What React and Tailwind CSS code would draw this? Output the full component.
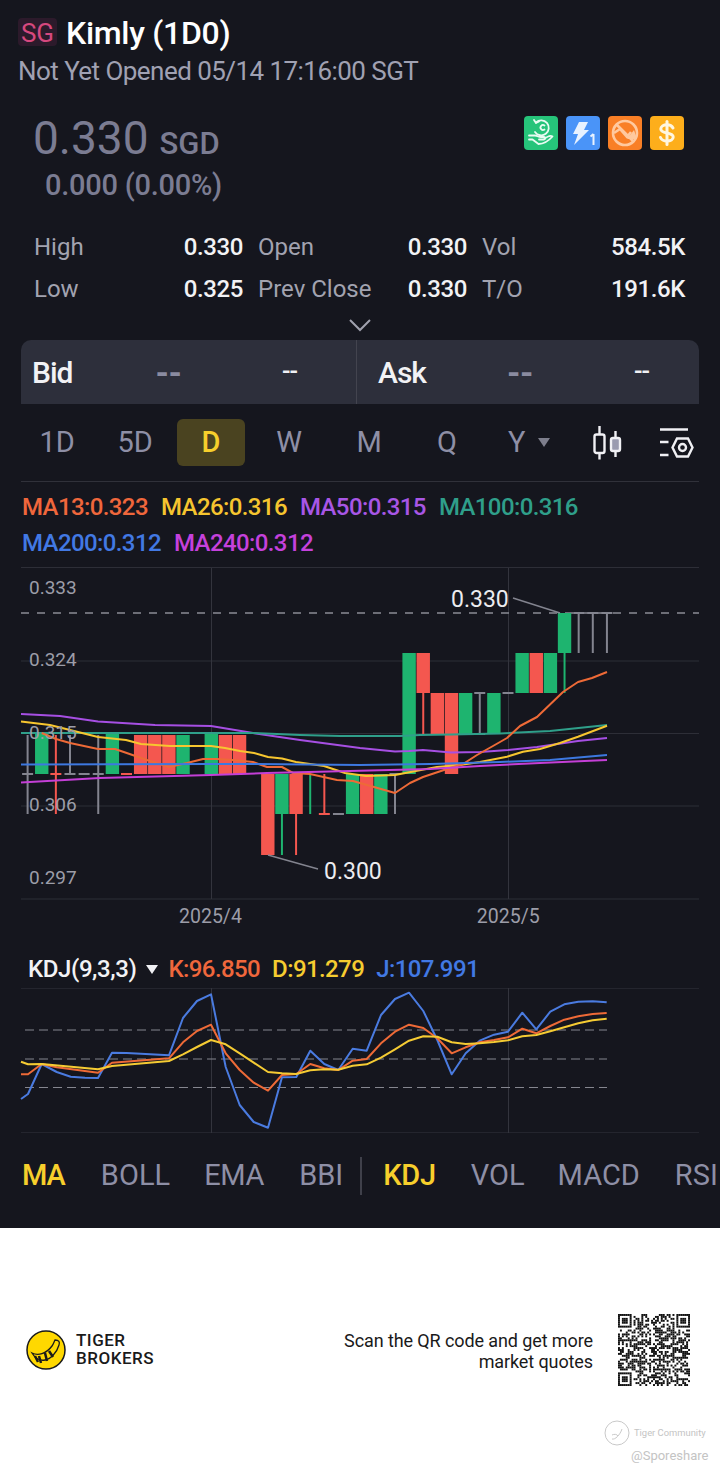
import React from 'react';

const X = (i) => 27.6 + i * 14.13;
const GREEN = '#1eb46f';
const RED = '#f4574f';
const GREY = '#83848f';

// [index, top, bottom, color]
const bodies = [
  [1, 733, 774, GREEN], [6, 733, 774, GREEN], [8, 735, 774, RED], [9, 735, 774, RED], [10, 735, 774, RED],
  [11, 735, 774, GREEN], [13, 733, 774, GREEN], [14, 735, 774, RED], [15, 735, 774, RED],
  [17, 774, 855, RED], [18, 774, 814, GREEN], [19, 774, 814, RED], [23, 774, 814, GREEN], [24, 774, 814, RED],
  [25, 774, 814, GREEN], [27, 653, 774, GREEN], [28, 653, 693, RED], [29, 693, 734, RED], [30, 693, 774, RED],
  [31, 693, 734, GREEN], [33, 693, 734, GREEN], [35, 653, 693, GREEN], [36, 653, 693, RED], [37, 653, 693, GREEN],
  [38, 613, 653, GREEN],
];
const wicks = [
  [0, 735, 814, GREY], [2, 735, 814, RED], [3, 735, 774, GREY], [5, 735, 814, GREY], [18, 814, 855, GREEN],
  [19, 814, 855, RED], [20, 774, 814, GREEN], [21, 774, 814, RED], [26, 774, 814, GREY], [28, 693, 734, RED],
  [32, 693, 734, GREY], [38, 653, 693, GREEN], [39, 613, 653, GREY], [40, 613, 653, GREY], [41, 613, 653, GREY],
];
const caps = [
  [0, 774, GREY], [2, 774, RED], [3, 774, GREY], [4, 774, GREY], [5, 774, GREY], [7, 774, RED], [21, 814, RED],
  [22, 814, GREY], [26, 774, GREY], [32, 693, GREY], [32, 734, GREY], [34, 693, GREY], [39, 613, GREY], [40, 613, GREY], [41, 613, GREY],
];

const maLines = [
  ['#a64fe3', '21,714 60,716 98,721.5 155,725 211,726 253,733 300,740 360,748 395,751.5 409,751 423,750 451,752.5 480,752 508,750 537,747 578,741 607,738'],
  ['#2f9f8a', '21,733 100,733 211,733 253,733 300,735 340,736 400,736 420,735 451,734.5 500,733.5 550,731 607,725'],
  ['#f7c62f', '21,721.5 50,725 98,737 126,740 141,744 170,746 211,746 225,748 240,751 254,753 268,757 282,758.5 296,762 324,766 345,773 366,776 395,775 417,770.7 437,767 460,765 480,762 507,756.7 523,751.7 540,749 560,743 578,736.7 607,725.7'],
  ['#ee6a37', '41.7,733 56,739 70,743 98,749 115,749 126.7,753 147,760 169,767 187,763 203,759 217,759 233,760 253,762 267,767 282,767 293,773 310,774 337,780 353,781 360,783 395,793 410,783 423,777 435,773 450,768 463,764 477,755 493,746 507,738 520,726 537,717 563,692 578,682 592,678 607,672'],
  ['#3d78e0', '21,764.5 211,764 250,764 360,765 430,764 500,762 550,760 607,755'],
  ['#c43fd6', '21,782.5 100,778 211,775 267,773 360,770.7 430,769 480,766 540,763 607,760'],
];

const kdjLines = [
  ['#4a7be0', '21,1099 28,1094 41.7,1064 56.7,1072 70.7,1076.7 85,1077.7 98,1078 112,1052.7 126.7,1053 169,1055.3 183,1018 197,1001 211,994.3 225.7,1067 239.7,1105 253.7,1122 268,1127.7 282,1077.3 296.3,1077 310.3,1050.7 324.3,1064 338.3,1070 352.7,1048.7 366.7,1050.7 381,1015 395,999 409,992.7 423.3,1011 437.3,1040 451.7,1074.3 465.7,1053.3 479.7,1040.7 494,1034.7 508,1031.7 522.3,1012.7 536.3,1029.3 550.3,1011.7 564.3,1004.3 578.3,1001.7 592.7,1001.3 606.7,1002.3'],
  ['#ee6a37', '21,1074.3 28,1074.3 41.7,1064 56.7,1067.3 98,1072.7 112,1062.7 169,1058.3 183,1042.3 197,1031 211,1024.7 225.7,1053.3 239.7,1070 253.7,1082.7 268,1090.7 282,1075 296.3,1074 310.3,1064 324.3,1068.3 338.3,1070 352.7,1060.7 366.7,1059 381,1043.3 395,1031.7 409,1024.7 423.3,1028 437.3,1038.3 451.7,1053.3 465.7,1047.3 479.7,1042.3 494,1040 508,1037.3 522.3,1028.7 536.3,1033.3 550.3,1026 564.3,1019.7 578.3,1016.3 592.7,1014 606.7,1013'],
  ['#f5cb33', '21,1061.7 28,1064.3 41.7,1064 98,1069.3 112,1066 169,1061 183,1054.3 197,1047 211,1040 225.7,1044.3 239.7,1053.3 253.7,1062.7 268,1072 282,1073.3 296.3,1074 310.3,1070.3 324.3,1069.3 338.3,1069.7 352.7,1065.7 366.7,1064.3 381,1057.7 395,1049.3 409,1040.7 423.3,1036.3 437.3,1036.7 451.7,1042.3 465.7,1044 479.7,1043.3 494,1042 508,1040.3 522.3,1036.3 536.3,1035 550.3,1031.3 564.3,1027.3 578.3,1023.3 592.7,1020.3 606.7,1018.7'],
];

const priceLabels = [
  ['0.333', 'top-[9px]'],
  ['0.324', 'top-[81px]'],
  ['0.315', 'top-[154px]'],
  ['0.306', 'top-[226px]'],
  ['0.297', 'top-[299px]'],
];

const PriceChart = () => (
  <div className="relative h-[333px] shrink-0">
    <svg className="block w-[720px] h-[333px]" viewBox="0 567 720 333">
      {[567.5, 661, 733.5, 806, 899].map((y) => (
        <line key={y} x1="21" x2="699" y1={y} y2={y} stroke="#2d2e37" strokeWidth="1" />
      ))}
      <line x1="211.5" x2="211.5" y1="568" y2="899" stroke="#33343d" />
      <line x1="508.5" x2="508.5" y1="568" y2="899" stroke="#33343d" />
      <line x1="21" x2="699" y1="613" y2="613" stroke="#8b8c95" strokeWidth="1.5" strokeDasharray="8 8" />
      {bodies.map(([i, t, b, c]) => (
        <rect key={i} x={X(i) - 6.7} y={t} width="13.4" height={b - t} fill={c} />
      ))}
      {wicks.map(([i, t, b, c]) => (
        <line key={`w${i}`} x1={X(i)} x2={X(i)} y1={t} y2={b} stroke={c} strokeWidth="2" />
      ))}
      {caps.map(([i, y, c]) => (
        <line key={`c${i}${y}`} x1={X(i) - 5.5} x2={X(i) + 5.5} y1={y} y2={y} stroke={c} strokeWidth="2" />
      ))}
      {maLines.map(([c, pts]) => (
        <polyline key={c} points={pts} fill="none" stroke={c} strokeWidth="2" strokeLinejoin="round" />
      ))}
      <line x1="513" y1="598" x2="560" y2="613" stroke={GREY} strokeWidth="1.5" />
      <line x1="268" y1="855" x2="318" y2="869" stroke={GREY} strokeWidth="1.5" />
    </svg>
    {priceLabels.map(([t, top]) => (
      <span key={t} className={`absolute left-[29px] ${top} text-[19px] leading-[24px] text-[#9c9da8]`}>{t}</span>
    ))}
    <span className="absolute left-[451px] top-[19px] text-[23px] leading-[28px] text-[#ececf0]">0.330</span>
    <span className="absolute left-[324px] top-[291px] text-[23px] leading-[28px] text-[#ececf0]">0.300</span>
  </div>
);

const KdjChart = () => (
  <svg className="block w-[720px] h-[146px] shrink-0" viewBox="0 988 720 146">
    <line x1="21" x2="699" y1="988.5" y2="988.5" stroke="#24252e" />
    <line x1="21" x2="699" y1="1132.5" y2="1132.5" stroke="#24252e" />
    <line x1="211.5" x2="211.5" y1="988" y2="1133" stroke="#33343d" />
    <line x1="508.5" x2="508.5" y1="988" y2="1133" stroke="#33343d" />
    {[1030, 1059, 1087.5].map((y) => (
      <line key={y} x1="25" x2="607" y1={y} y2={y} stroke="#85868f" strokeWidth="1" strokeDasharray="9 5" />
    ))}
    {kdjLines.map(([c, pts]) => (
      <polyline key={c} points={pts} fill="none" stroke={c} strokeWidth="2" strokeLinejoin="round" />
    ))}
  </svg>
);

const Badges = () => (
  <div className="flex gap-2">
    <svg className="rounded" width="34" height="34" viewBox="0 0 34 34" fill="none" stroke="#e9fbf2" strokeWidth="1.8" strokeLinecap="round" strokeLinejoin="round">
      <rect width="34" height="34" fill="#26c47a" stroke="none" />
      <path d="M12 6.500A7.500 7.500 0 1 1 11 16" />
      <path d="M10 4l2 3 3-1.500" />
      <path d="M20.500 9.500a2.500 2.500 0 1 0 0 4" />
      <path d="M5 19.500h6c2.500 0 3 1.500 6 1.500h3c1.500 0 1.500 2.500 0 2.500h-5" />
      <path d="M5 23.500l3.500 0 6 4.500c4 0 10-3 14-7.500-2-1.500-4-.5-8 2" />
    </svg>
    <svg className="rounded" width="34" height="34" viewBox="0 0 34 34">
      <rect width="34" height="34" fill="#4a94f8" />
      <path d="M13 6h9l-4 8h5L8 29l4-11H7z" fill="#e8f2ff" />
      <path d="M27.500 18v11M24.500 20.500l3-2.500" stroke="#e8f2ff" strokeWidth="2" fill="none" />
    </svg>
    <svg className="rounded" width="34" height="34" viewBox="0 0 34 34" fill="none" stroke="#ffc99f" strokeWidth="2.600" strokeLinejoin="round">
      <rect width="34" height="34" fill="#f97f26" stroke="none" />
      <circle cx="17" cy="17" r="12" />
      <path d="M8 8l18 18" />
      <path d="M6 17l6-4 7 8 4-5" />
      <path d="M19 23l7-9 3 9z" fill="#ffc99f" stroke="none" />
    </svg>
    <svg className="rounded" width="34" height="34" viewBox="0 0 34 34" fill="none" stroke="#fff6df" strokeWidth="3" strokeLinecap="round">
      <rect width="34" height="34" fill="#fdae1b" stroke="none" />
      <path d="M23 12c-1-2-3.200-3.200-6-3.200-3.500 0-6.200 1.700-6.200 4.200 0 5.500 12.400 2.500 12.400 8 0 2.500-2.700 4-6.200 4-3 0-5.500-1.200-6.500-3.500" />
      <path d="M17 5.500v23" />
    </svg>
  </div>
);

const StatCol = ({ w, rows }) => (
  <div className={`${w} flex flex-col`}>
    {rows.map(([k, v]) => (
      <div key={k} className="h-[42px] flex items-center justify-between">
        <span className="text-[#a2a3b0]">{k}</span>
        <span className="text-[#f2f2f5] font-medium tracking-[-0.4px]">{v}</span>
      </div>
    ))}
  </div>
);

const TabItem = ({ w, children }) => (
  <div className={`${w} h-[47px] flex items-center justify-center text-[29px] tracking-[-0.2px] text-[#8e8fa6]`}>{children}</div>
);

// module pattern for the qr square
const qrCells = () => {
  const n = 37;
  const cells = [];
  let s = 20250514;
  const finder = (r, c) => {
    const a = r < 8 ? 0 : n - 7;
    const b = c < 8 ? 0 : n - 7;
    const dr = r - a;
    const dc = c - b;
    if (dr < 0 || dr > 6 || dc < 0 || dc > 6) return false;
    return dr === 0 || dr === 6 || dc === 0 || dc === 6 || (dr > 1 && dr < 5 && dc > 1 && dc < 5);
  };
  for (let r = 0; r < n; r++) {
    for (let c = 0; c < n; c++) {
      s = (s * 1664525 + 1013904223) % 4294967296;
      const corner = (r < 8 && c < 8) || (r < 8 && c >= n - 8) || (r >= n - 8 && c < 8);
      const f = corner ? finder(r, c) : s / 4294967296 > 0.5;
      if (f) cells.push([r, c]);
    }
  }
  return cells;
};

const Qr = () => (
  <svg className="block w-[72px] h-[72px]" viewBox="0 0 37 37">
    {qrCells().map(([r, c]) => (
      <rect key={`${r}-${c}`} x={c} y={r} width="1" height="1" fill="#111" />
    ))}
  </svg>
);

export default function App() {
  return (
    <div className="w-[720px] h-[1472px] overflow-hidden bg-white font-['Roboto',sans-serif]">
      <div className="h-[1228px] bg-[#15161e] flex flex-col">
        {/* title */}
        <div className="h-[38px] mt-[14px] pl-[18px] flex items-center">
          <span className="w-[39px] h-[28px] -mt-[3px] bg-[#2c1a2b] text-[#d6487e] text-[26px] leading-[30px] text-center rounded-sm">SG</span>
          <span className="ml-[9px] text-[32px] tracking-[-0.3px] font-medium text-white whitespace-nowrap">Kimly (1D0)</span>
        </div>
        <div className="h-[36px] mt-[1px] pl-[18px] flex items-center text-[26px] tracking-[-0.55px] text-[#a0a1b2] whitespace-nowrap">
          Not Yet Opened 05/14 17:16:00 SGT
        </div>

        {/* price */}
        <div className="h-[120px] mt-[17px] pl-[33px] pr-[36px] flex justify-between items-start">
          <div className="flex flex-col text-[#7b7c92]">
            <div className="h-[64px] flex items-baseline gap-[11px] pt-[2px]">
              <span className="text-[46px] leading-[60px]">0.330</span>
              <span className="text-[31px] font-medium">SGD</span>
            </div>
            <div className="ml-[12px] -mt-[5px] text-[29px] tracking-[-0.25px] leading-[40px] font-medium">0.000 (0.00%)</div>
          </div>
          <div className="mt-[10px]"><Badges /></div>
        </div>

        {/* stats */}
        <div className="pl-[34px] pr-[35px] flex text-[24px] gap-[15px]">
          <StatCol w="w-[209px]" rows={[['High', '0.330'], ['Low', '0.325']]} />
          <StatCol w="w-[209px]" rows={[['Open', '0.330'], ['Prev Close', '0.330']]} />
          <StatCol w="w-[203px]" rows={[['Vol', '584.5K'], ['T/O', '191.6K']]} />
        </div>
        <div className="h-[30px] flex items-center justify-center">
          <svg width="24" height="14" viewBox="0 0 24 14" fill="none" stroke="#a0a1ae" strokeWidth="2"><path d="M2 2l10 10 10-10" /></svg>
        </div>

        {/* bid ask */}
        <div className="mx-[21px] h-[64px] flex rounded-t-[10px] bg-[#2d2f3b] shrink-0 text-[30px]">
          <div className="w-[336px] pl-[11px] pr-[59px] flex items-center border-r border-[#43444f]">
            <span className="font-medium tracking-[-1px] text-[#f2f2f5]">Bid</span>
            <span className="ml-[83px] text-[34px] tracking-[-0.5px] text-[#8a8ba0] font-bold">--</span>
            <span className="ml-auto text-[25px] tracking-[-1px] text-[#f0f0f4] font-medium">--</span>
          </div>
          <div className="flex-1 pl-[21px] pr-[50px] flex items-center">
            <span className="font-medium tracking-[-1px] text-[#f2f2f5]">Ask</span>
            <span className="ml-[81px] text-[34px] tracking-[-0.5px] text-[#8a8ba0] font-bold">--</span>
            <span className="ml-auto text-[25px] tracking-[-1px] text-[#f0f0f4] font-medium">--</span>
          </div>
        </div>

        {/* period tabs */}
        <div className="h-[78px] mx-[21px] flex items-center border-b border-[#30313a] shrink-0">
          <TabItem w="w-[72px]">1D</TabItem>
          <TabItem w="w-[84px]">5D</TabItem>
          <div className="w-[68px] h-[47px] rounded-md bg-[#4a4320] flex items-center justify-center text-[29px] font-medium text-[#f7cf2c]">D</div>
          <TabItem w="w-[88px]">W</TabItem>
          <TabItem w="w-[72px]">M</TabItem>
          <TabItem w="w-[84px]">Q</TabItem>
          <div className="w-[104px] h-[47px] flex items-center text-[29px] text-[#8e8fa6] pl-[19px]">
            <span>Y</span>
            <svg className="ml-[13px]" width="12" height="9" viewBox="0 0 12 9"><path d="M0 0h12L6 9z" fill="#7d7e8c" /></svg>
          </div>
          <svg width="30" height="34" viewBox="0 0 30 34" fill="none" stroke="#f0f0f4" strokeWidth="2.4">
            <rect x="1.500" y="8.500" width="10" height="18.500" rx="2" />
            <path d="M6.500 0v8.500M6.500 27v6.500" />
            <rect x="18" y="12" width="9" height="13" rx="2" fill="#9a9bb0" />
            <path d="M22.500 5v7M22.500 25v6" />
          </svg>
          <svg className="ml-[37px]" width="34" height="30" viewBox="0 0 34 30" fill="none" stroke="#f0f0f4" strokeWidth="2.400">
            <path d="M0 1.500h28M0 14h8.500M0 27h8.500" />
            <path d="M17 10.500h11l4.500 9-4.500 9H17l-4.500-9z" />
            <circle cx="22.500" cy="19.500" r="3.500" />
          </svg>
        </div>

        {/* MA legend */}
        <div className="pl-[22px] pt-[7px] h-[85px] text-[24px] leading-[36px] tracking-[-0.6px] font-medium shrink-0 whitespace-nowrap">
          <div className="flex gap-[13px]">
            <span className="text-[#f0673c]">MA13:0.323</span>
            <span className="text-[#f6c52f]">MA26:0.316</span>
            <span className="text-[#a856e6]">MA50:0.315</span>
            <span className="text-[#2f9f8a]">MA100:0.316</span>
          </div>
          <div className="flex gap-[13px]">
            <span className="text-[#4279e4]">MA200:0.312</span>
            <span className="text-[#c541dc]">MA240:0.312</span>
          </div>
        </div>

        <PriceChart />

        <div className="h-[36px] pb-[2px] pl-[179px] shrink-0 flex items-center text-[19.500px] text-[#9c9da8] whitespace-nowrap">
          <span>2025/4</span>
          <span className="ml-[235px]">2025/5</span>
        </div>

        {/* KDJ legend */}
        <div className="h-[52px] shrink-0 pl-[28px] pt-[14px] flex items-center text-[24px] font-medium whitespace-nowrap">
          <span className="text-[#f2f2f5] tracking-[-0.4px]">KDJ(9,3,3)</span>
          <svg className="ml-[9px]" width="12" height="9" viewBox="0 0 12 9"><path d="M0 0h12L6 9z" fill="#f0f0f4" /></svg>
          <span className="ml-[11px] tracking-[-0.6px] text-[#f0673c]">K:96.850</span>
          <span className="ml-[12px] tracking-[-0.6px] text-[#f6cc30]">D:91.279</span>
          <span className="ml-[12px] tracking-[-0.6px] text-[#4279e4]">J:107.991</span>
        </div>

        <KdjChart />

        {/* indicator tabs */}
        <div className="h-[94px] pb-[10px] shrink-0 flex items-center text-[29px] whitespace-nowrap text-[#8e8fa6]">
          <span className="ml-[22px] font-medium tracking-[-1px] text-[#f7cf2c]">MA</span>
          <span className="ml-[36px]">BOLL</span>
          <span className="ml-[34px] tracking-[-0.3px]">EMA</span>
          <span className="ml-[35px]">BBI</span>
          <div className="ml-[17px] w-[2px] h-[38px] bg-[#3f404a]" />
          <span className="ml-[21px] font-medium tracking-[-0.3px] text-[#f7cf2c]">KDJ</span>
          <span className="ml-[35px]">VOL</span>
          <span className="ml-[33px]">MACD</span>
          <span className="ml-[35px]">RSI</span>
        </div>
      </div>

      {/* footer */}
      <div className="relative h-[244px] bg-white">
        <div className="pt-[86px] pl-[26px] pr-[30px] flex items-start">
          <svg className="mt-[16px]" width="40" height="40" viewBox="0 0 40 40">
            <circle cx="20" cy="20" r="19" fill="#ffd800" stroke="#1a1a1a" strokeWidth="1.500" />
            <path d="M6 23c6 3 14 1 20-7 1.500-2 2-4 3-6 4 0 5 2 4 5-2 7-8 14-14 15-5 1-10-2-13-7z" fill="#ffd800" stroke="#1a1a1a" strokeWidth="1.300" />
            <path d="M9 26l3 6M13 26l2 7M19 23l2 8M23 21l4 6" stroke="#1a1a1a" strokeWidth="2.500" />
          </svg>
          <div className="ml-[10px] mt-[17px] text-[17px] leading-[18px] font-medium text-[#1a1a1a] tracking-[0.5px]">
            <div>TIGER</div>
            <div>BROKERS</div>
          </div>
          <div className="ml-auto mt-[16px] text-right text-[18px] leading-[21px] tracking-[-0.1px] text-[#1a1a1a]">
            Scan the QR code and get more<br />market quotes
          </div>
          <div className="ml-[25px]"><Qr /></div>
        </div>
        <div className="absolute left-[604px] top-[192px]">
          <svg width="26" height="26" viewBox="0 0 26 26" fill="none" stroke="#c9c9c9" strokeWidth="1">
            <circle cx="13" cy="13" r="12" />
            <path d="M8 19c3 1 8-4 10-10M8 15c2-1 5-1 6 1" />
          </svg>
        </div>
        <span className="absolute left-[634px] top-[199px] text-[9.400px] leading-[12px] text-[#c4c4c4] whitespace-nowrap">Tiger Community</span>
        <span className="absolute left-[631px] top-[220px] text-[13px] leading-[16px] text-[#c4c4c4] whitespace-nowrap">@Sporeshare</span>
      </div>
    </div>
  );
}
